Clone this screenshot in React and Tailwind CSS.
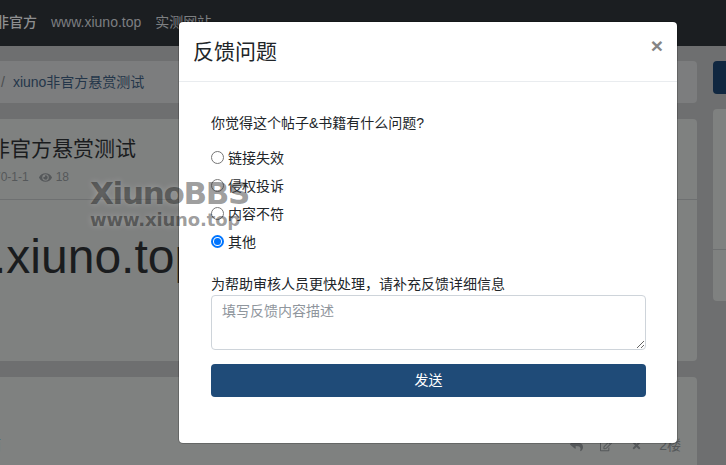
import { FaEye, FaRegEdit, FaReply, FaTimes } from "react-icons/fa";

const reasons = [
  { label: "链接失效", checked: false },
  { label: "侵权投诉", checked: false },
  { label: "内容不符", checked: false },
  { label: "其他", checked: true },
];

function Radio({ checked }) {
  if (checked) {
    return (
      <span className="-mt-[2px] flex h-[13px] w-[13px] shrink-0 items-center justify-center rounded-full border-2 border-[#0075ff] bg-white">
        <span className="h-[7px] w-[7px] rounded-full bg-[#0075ff]" />
      </span>
    );
  }
  return <span className="-mt-[2px] h-[13px] w-[13px] shrink-0 rounded-full border border-[#767676] bg-white" />;
}

function FeedbackModal() {
  return (
    <div className="absolute left-[178px] top-[21px] flex h-[423px] w-[500px] flex-col rounded-[5px] border border-black/20 bg-white bg-clip-padding text-[#212529]">
      <div className="flex h-[60px] shrink-0 items-center justify-between border-b border-[#e9ecef] px-[14px]">
        <h5 className="text-[21px] leading-[30px]">反馈问题</h5>
        <span className="-mt-[12px] text-[21px] leading-[24px] font-bold text-[#858585]">×</span>
      </div>
      <div className="flex flex-1 flex-col pr-[31px] pl-[32px] pt-[31px]">
        <p className="text-[14px] leading-[20px]">你觉得这个帖子&amp;书籍有什么问题?</p>
        <div className="mt-[11px] flex flex-col">
          {reasons.map((r) => (
            <label key={r.label} className="flex h-[28px] items-center gap-[4px] text-[14px]">
              <Radio checked={r.checked} />
              <span>{r.label}</span>
            </label>
          ))}
        </div>
        <p className="mt-[18px] text-[14px] leading-[20px]">为帮助审核人员更快处理，请补充反馈详细信息</p>
        <textarea
          readOnly
          placeholder="填写反馈内容描述"
          className="mt-[1px] h-[55px] w-full rounded-[4px] border border-[#ced4da] px-[10px] py-[5px] text-[14px] leading-[20px] outline-none placeholder:text-[#8f969d]"
        />
        <button className="mt-[14px] h-[33px] w-full rounded-[4px] bg-[#1f4b78] text-[14px] text-white">发送</button>
      </div>
    </div>
  );
}

export default function App() {
  return (
    <div className="relative h-[465px] w-[726px] overflow-hidden bg-[#6e6f70] font-['Liberation_Sans','Noto_Sans_CJK_SC',sans-serif]">
      <nav className="flex h-[46px] items-center gap-[14px] bg-[#1b1e21] pb-[2px] text-[14px] text-[#7d7f81]">
        <span className="-ml-[5px] font-medium text-[#8d8e90]">非官方</span>
        <span>www.xiuno.top</span>
        <span>实测网站</span>
      </nav>

      <div className="-ml-[10px] flex items-start gap-[16px] pt-[15px]">
        <div className="flex w-[707px] shrink-0 flex-col gap-[16px]">
          <div className="flex h-[42px] items-center gap-[8px] rounded-[4px] bg-[#7c7d7e] pl-[11px] text-[14px] text-[#24364a]">
            <span className="text-[#4b4d4f]">/</span>
            <span>xiuno非官方悬赏测试</span>
          </div>
          <div className="h-[242px] overflow-hidden rounded-[4px] bg-[#7f8180]">
            <div className="mt-[14px] -ml-[1px] text-[21px] leading-[32px] text-[#1a1c1e]">非官方悬赏测试</div>
            <div className="flex h-[24px] items-center gap-[10px] text-[12px] text-[#55585a]">
              <span className="ml-[4px]">70-1-1</span>
              <span className="flex items-center gap-[4px]">
                <FaEye size={13} />
                18
              </span>
            </div>
            <div className="mt-[10px] h-px bg-[#6e7071]" />
            <div className="ml-[3px] mt-[29px] text-[48px] leading-[56px] whitespace-nowrap text-[#1a1c1e]">.xiuno.top</div>
          </div>
          <div className="flex h-[100px] items-start justify-between rounded-[4px] bg-[#7f8180] pt-[58px] pr-[16px] text-[14px] text-[#55585a]">
            <span className="-ml-[3px] text-[#3f6a8f]">而</span>
            <div className="flex items-center">
              <FaReply size={13} className="mr-[17px]" />
              <FaRegEdit size={12} className="mr-[19px]" />
              <FaTimes size={11} className="mr-[17px]" />
              <span>2楼</span>
            </div>
          </div>
        </div>
        <div className="flex flex-1 flex-col gap-[15px]">
          <div className="h-[33px] rounded-l-[4px] bg-[#102740]" />
          <div className="h-[192px] rounded-l-[4px] bg-[#7f8180]">
            <div className="mt-[140px] h-px bg-[#6e7071]" />
          </div>
        </div>
      </div>

      <FeedbackModal />

      <div className="absolute left-[90px] top-[175px] font-['DejaVu_Sans',sans-serif] font-bold text-black/40 [text-shadow:0_0_6px_rgba(255,255,255,0.25)]">
        <div className="text-[31px] leading-[36px] tracking-[-1.3px]">XiunoBBS</div>
        <div className="-mt-[2px] text-[18px] leading-[22px] tracking-[-0.15px]">www.xiuno.top</div>
      </div>
    </div>
  );
}
